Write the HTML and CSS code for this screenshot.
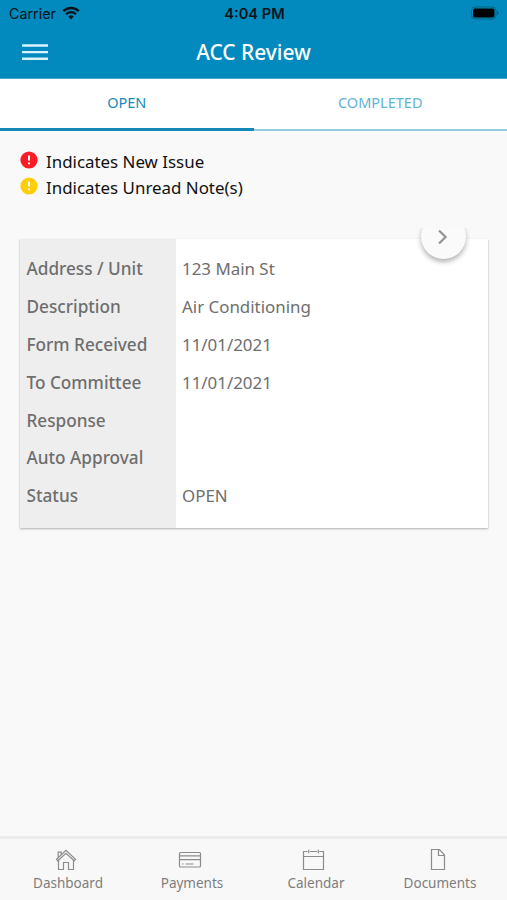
FILE: index.html
```html
<!DOCTYPE html>
<html lang="en">
<head>
    <meta charset="UTF-8">
    <meta name="viewport" content="width=device-width, initial-scale=1.0">
    <title>ACC Review</title>
    <link rel="stylesheet" href="styles.css">
</head>
<body>
    <header class="header">
        <div class="status-bar">
            <div class="carrier">
                <span>Carrier</span>
                <svg class="wifi" width="18" height="14" viewBox="0 0 18 14">
                    <path d="M1.2 5.2a11.2 11.2 0 0 1 15.6 0" fill="none" stroke="#07131a" stroke-width="2.4"/>
                    <path d="M4 8.2a7.2 7.2 0 0 1 10 0" fill="none" stroke="#07131a" stroke-width="2.2"/>
                    <path d="M9 13.4l-2.7-2.8a4 4 0 0 1 5.4 0z" fill="#07131a"/>
                </svg>
            </div>
            <span class="time">4:04 PM</span>
            <svg class="battery" width="30" height="14" viewBox="0 0 30 14">
                <rect x="1.5" y="1" width="24.5" height="12" rx="3.5" fill="none" stroke="#07607f" stroke-width="1"/>
                <rect x="3" y="2.5" width="21.5" height="9" rx="2" fill="#000"/>
                <path d="M27.2 5.3c1.6.5 1.6 2.9 0 3.4z" fill="#07485f"/>
            </svg>
        </div>
        <div class="title-bar">
            <button class="menu" aria-label="Menu">
                <svg width="26" height="18" viewBox="0 0 26 18">
                    <path d="M0 2.5h26M0 9.100h26M0 15.700h26" stroke="#d9f4fd" stroke-width="2.4"/>
                </svg>
            </button>
            <h1>ACC Review</h1>
        </div>
    </header>

    <nav class="tabs">
        <a class="tab active" href="#">OPEN</a>
        <a class="tab" href="#">COMPLETED</a>
    </nav>

    <main class="content">
        <ul class="legend">
            <li>
                <svg class="alert new" width="18" height="18" viewBox="0 0 18 18">
                    <circle cx="9" cy="9" r="8.6"/>
                    <path d="M9 4.6v5M9 11.4v1.8"/>
                </svg>
                <span>Indicates New Issue</span>
            </li>
            <li>
                <svg class="alert unread" width="18" height="18" viewBox="0 0 18 18">
                    <circle cx="9" cy="9" r="8.6"/>
                    <path d="M9 4.6v5M9 11.4v1.8"/>
                </svg>
                <span>Indicates Unread Note(s)</span>
            </li>
        </ul>

        <section class="card">
            <div class="next-wrap">
                <button class="next" aria-label="Next">
                    <svg width="12" height="16" viewBox="0 0 12 16">
                        <path d="M2 1.5L8.6 8 2 14.5" fill="none" stroke="#929292" stroke-width="2.2"/>
                    </svg>
                </button>
            </div>
            <dl class="details">
                <dt>Address / Unit</dt><dd>123 Main St</dd>
                <dt>Description</dt><dd>Air Conditioning</dd>
                <dt>Form Received</dt><dd>11/01/2021</dd>
                <dt>To Committee</dt><dd>11/01/2021</dd>
                <dt>Response</dt><dd></dd>
                <dt>Auto Approval</dt><dd></dd>
                <dt>Status</dt><dd>OPEN</dd>
            </dl>
        </section>
    </main>

    <footer class="bottom-nav">
        <a href="#">
            <svg width="24" height="24" viewBox="0 0 24 24">
                <path d="M2.5 11.2L12 2.4l9.5 8.8-1.3 1.6L12 5.4l-8.2 7.4z"/>
                <path d="M4.5 12.3v9.2h5v-7h5v7h5v-9.2M4.2 9.6V4.2h3v2.6"/>
            </svg>
            <span>Dashboard</span>
        </a>
        <a href="#">
            <svg width="24" height="24" viewBox="0 0 24 24">
                <rect x="1.5" y="4.5" width="21" height="14.5" rx="1"/>
                <path d="M1.5 7.9h21M1.5 11.6h21M4 16h1.5M7.5 16h8"/>
            </svg>
            <span>Payments</span>
        </a>
        <a href="#">
            <svg width="24" height="24" viewBox="0 0 24 24">
                <path d="M5.5 3.5h-4v18h20v-18h-4M8 3.5h7M1.5 8.5h20M6.7 1.8v3.5M16.3 1.8v3.5"/>
            </svg>
            <span>Calendar</span>
        </a>
        <a href="#">
            <svg width="24" height="24" viewBox="0 0 24 24">
                <path d="M5.5 1.5h8l5 5.5v14.5h-13zM12.5 1.5v6h6"/>
            </svg>
            <span>Documents</span>
        </a>
    </footer>
</body>
</html>
```
FILE: styles.css
```css
* {
    box-sizing: border-box;
}
body {
    margin: 0;
    height: 100vh;
    display: flex;
    flex-direction: column;
    overflow: hidden;
    background: #f9f9f9;
    font-family: 'Noto Sans', 'Open Sans', sans-serif;
    color: #111;
}
button {
    padding: 0;
    border: none;
    cursor: pointer;
}
.header {
    height: 79px;
    background: #028abe;
    border-bottom: 1px solid #41a9d0;
}
.status-bar {
    height: 27px;
    padding: 0 7px 0 9px;
    display: grid;
    grid-template-columns: 1fr auto 1fr;
    align-items: center;
    font-family: Inter, sans-serif;
    font-size: 14.3px;
    color: #07131a;
}
.carrier {
    display: flex;
    align-items: center;
    gap: 6px;
}
.wifi {
    margin-bottom: 2px;
}
.time {
    font-size: 14.6px;
    font-weight: 600;
}
.battery {
    justify-self: end;
    margin-bottom: 1px;
}
.title-bar {
    height: 49px;
    padding: 0 22px;
    display: grid;
    grid-template-columns: 1fr auto 1fr;
    align-items: center;
}
.menu {
    width: 26px;
    height: 18px;
    background: none;
}
.menu svg {
    display: block;
}
.title-bar h1 {
    margin: 0;
    font-size: 20.9px;
    font-weight: 500;
    color: #fff;
}
.tabs {
    height: 52px;
    display: flex;
    background: #fff;
}
.tab {
    flex: 1;
    padding-bottom: 4px;
    display: flex;
    align-items: center;
    justify-content: center;
    border-bottom: 2px solid #91cde1;
    font-size: 14.5px;
    color: #5fb4d2;
    text-decoration: none;
}
.tab.active {
    padding-bottom: 3px;
    border-bottom: 3px solid #1489b7;
    color: #168bb8;
}
.content {
    flex: 1;
    padding: 19px 19px 0 20px;
}
.legend {
    margin: 0;
    padding: 0;
    list-style: none;
    font-size: 16.9px;
}
.legend li {
    height: 26px;
    display: flex;
    gap: 8px;
    line-height: 23px;
}
.alert {
    margin-top: 1px;
}
.alert path {
    stroke: #fff;
    stroke-width: 2;
}
.alert.new {
    fill: #fc1c24;
}
.alert.unread {
    fill: #ffce08;
}
.card {
    position: relative;
    margin-top: 37px;
    background: #fff;
    box-shadow: 0 1px 2px rgba(0, 0, 0, 0.3);
}
/* clips the top of the button shadow */
.next-wrap {
    position: absolute;
    top: -11px;
    right: 12px;
    width: 65px;
    height: 54px;
    overflow: hidden;
}
.next {
    width: 45px;
    height: 45px;
    margin: -14px 0 0 10px;
    display: flex;
    align-items: center;
    justify-content: center;
    border-radius: 50%;
    background: #fafafa;
    box-shadow: 0 3px 5px rgba(0, 0, 0, 0.3);
}
.next svg {
    margin-right: 1px;
}
.details {
    height: 289px;
    margin: 0;
    padding: 11px 0 0;
    display: grid;
    grid-template-columns: 156px 1fr;
    grid-auto-rows: 37.9px;
    align-content: start;
    background: linear-gradient(to right, #eee 156px, #fff 156px);
    font-size: 16.9px;
    line-height: 38px;
    color: #6e6e6e;
}
.details dt {
    padding-left: 6.5px;
    font-size: 17.2px;
    font-weight: 500;
}
.details dd {
    margin: 0;
    padding-left: 6px;
}
.bottom-nav {
    height: 64px;
    padding: 9px 5px 0 6px;
    display: flex;
    border-top: 3px solid #ededed;
    background: #f8f8f8;
}
.bottom-nav a {
    flex: 1;
    display: flex;
    flex-direction: column;
    align-items: center;
    font-size: 13.5px;
    line-height: 22px;
    color: #7d7d7d;
    text-decoration: none;
}
.bottom-nav svg {
    margin-right: 4px;
    fill: none;
    stroke: #8c8c8c;
    stroke-width: 1.2;
}
```
